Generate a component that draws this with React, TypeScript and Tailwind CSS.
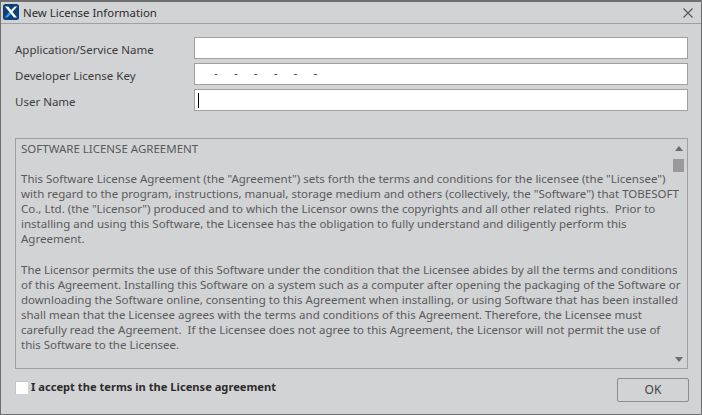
const LINES = [
  "SOFTWARE LICENSE AGREEMENT",
  "",
  "This Software License Agreement (the \"Agreement\") sets forth the terms and conditions for the licensee (the \"Licensee\")",
  "with regard to the program, instructions, manual, storage medium and others (collectively, the \"Software\") that TOBESOFT",
  "Co., Ltd. (the \"Licensor\") produced and to which the Licensor owns the copyrights and all other related rights.  Prior to",
  "installing and using this Software, the Licensee has the obligation to fully understand and diligently perform this",
  "Agreement.",
  "",
  "The Licensor permits the use of this Software under the condition that the Licensee abides by all the terms and conditions",
  "of this Agreement. Installing this Software on a system such as a computer after opening the packaging of the Software or",
  "downloading the Software online, consenting to this Agreement when installing, or using Software that has been installed",
  "shall mean that the Licensee agrees with the terms and conditions of this Agreement. Therefore, the Licensee must",
  "carefully read the Agreement.  If the Licensee does not agree to this Agreement, the Licensor will not permit the use of",
  "this Software to the Licensee.",
];

function Row({ label, children }: { label: string; children?: React.ReactNode }) {
  return (
    <div className="flex items-center h-[22px]">
      <div className="w-[179px] text-[#3c3c3c] text-[11.5px] pt-[3px]">{label}</div>
      <div className="w-[494px] h-[22px] bg-white border border-[#a0a0a0] flex items-center text-[12px] text-[#555]">{children}</div>
    </div>
  );
}

export default function App() {
  return (
    <div className="w-[702px] h-[415px] bg-[#d2d3d5] border border-[#6e6e6e] border-t-2 flex flex-col font-['Noto_Sans','Open_Sans',sans-serif] overflow-hidden">
      <div className="h-[22px] shrink-0 border-b border-[#a0a0a0] flex items-center pl-[2px] pr-[8px]">
        <svg width="16" height="16" viewBox="0 0 16 16" className="shrink-0 mt-[-2px]">
          <rect width="16" height="16" rx="2.5" fill="#103f78" />
          <path d="M11.6 2.5h2.6L9.4 8l-1.5-1.7z" fill="#e6f6fd" />
          <path d="M6.4 8 8 9.9 4.4 13.6H1.8z" fill="#2ea6e6" />
          <path d="M2 2.5h3.2l8.8 11.1h-3.2z" fill="#ffffff" />
        </svg>
        <span className="ml-[4px] text-[11.4px] text-[#2c2c2c] flex-1">New License Information</span>
        <svg width="10" height="10" viewBox="0 0 10 10" className="shrink-0">
          <path d="M.5.5l9 9M9.5.5l-9 9" stroke="#555" strokeWidth="1.1" fill="none" />
        </svg>
      </div>
      <div className="flex-1 flex flex-col pt-[13px] pl-[14px] pr-[13px]">
        <div className="flex flex-col gap-[4px]">
          <Row label="Application/Service Name" />
          <Row label="Developer License Key">
            <span className="flex gap-[16px] pl-[19px] text-[#555]">
              <span>-</span><span>-</span><span>-</span><span>-</span><span>-</span><span>-</span>
            </span>
          </Row>
          <Row label="User Name">
            <span className="ml-[3px] w-px h-[15px] bg-black" />
          </Row>
        </div>
        <div className="mt-[27px] h-[231px] border border-[#a0a0a0] flex pl-[5px] pt-[2px] relative">
          <div className="flex-1 text-[11.5px] leading-[15.08px] text-[#5a5a5a] whitespace-pre">
            {LINES.map((l, i) => <div key={i} className="h-[15.08px]">{l || " "}</div>)}
          </div>
          <div className="absolute right-[3px] top-0 bottom-0 w-[11px] flex flex-col items-center">
            <svg width="8" height="5" viewBox="0 0 8 5" className="mt-[7px]"><path d="M4 0l4 5H0z" fill="#6b6b6b" /></svg>
            <div className="w-[11px] h-[13px] mt-[8px] bg-[#9a9a9a]" />
            <svg width="8" height="5" viewBox="0 0 8 5" className="mt-auto mb-[6px]"><path d="M4 5L0 0h8z" fill="#6b6b6b" /></svg>
          </div>
        </div>
        <div className="flex items-start mt-[9px]">
          <div className="flex items-center mt-[1px]">
            <div className="w-[13px] h-[13px] bg-white border-l border-t border-[#c4c4c4]" />
            <span className="ml-[3px] text-[11.15px] font-bold text-[#2c2c2c]">I accept the terms in the License agreement</span>
          </div>
          <button className="ml-auto mr-[-1px] w-[72px] h-[24px] border border-[#8c8c8c] rounded-[2px] text-[12px] text-[#444]">OK</button>
        </div>
      </div>
    </div>
  );
}
